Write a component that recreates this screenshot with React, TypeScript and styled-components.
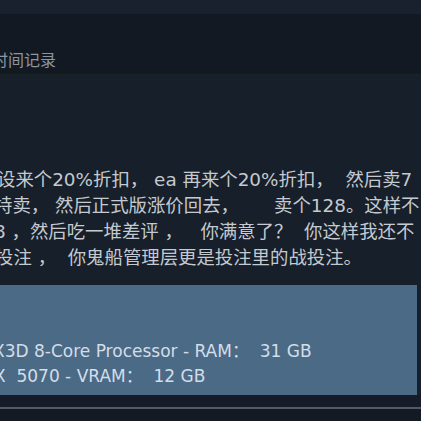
import React from "react";
import styled, { createGlobalStyle } from "styled-components";

const GlobalStyle = createGlobalStyle`
  html, body {
    margin: 0;
    padding: 0;
    background: #171f2a;
    overflow: hidden;
  }
`;

const Page = styled.div`
  width: 421px;
  height: 421px;
  overflow: hidden;
  display: flex;
  flex-direction: column;
  background: #171f2a;
  font-family: "DejaVu Sans", "Noto Sans CJK SC", sans-serif;
`;

const TopStrip = styled.div`
  height: 14px;
  flex: none;
  background: #19212f;
`;

const Header = styled.div`
  height: 61px;
  flex: none;
  background: #131922;
  display: flex;
  align-items: flex-end;
  padding-bottom: 3px;
  box-sizing: border-box;
  border-bottom: 1px dotted #1f2b29;
`;

const Line = styled.div<{ $shift: number }>`
  white-space: pre;
  margin-left: ${(p) => p.$shift}px;
`;

const HistoryLink = styled(Line)`
  font-size: 16px;
  line-height: 20px;
  color: #8d959e;
`;

const ReviewBody = styled.div`
  flex: none;
  height: 210px;
  padding-top: 92px;
  box-sizing: border-box;
  display: flex;
  flex-direction: column;
`;

const ReviewLine = styled(Line)`
  font-size: 18.4px;
  line-height: 26px;
  height: 26px;
  color: #c4cad0;
`;

const SpecsPanel = styled.div`
  flex: none;
  width: 417px;
  height: 110px;
  background: #4b6a86;
  box-sizing: border-box;
  padding-top: 54px;
  display: flex;
  flex-direction: column;
`;

const SpecLine = styled(Line)`
  font-size: 17px;
  line-height: 25px;
  height: 25px;
  color: #d3dee8;
`;

const Footer = styled.div`
  flex: 1;
  display: flex;
  flex-direction: column;
  background: #131a24;
`;

const FooterGap = styled.div`
  height: 12px;
  background: #151c27;
`;

const Divider = styled.div`
  height: 2px;
  background: #515b67;
`;

export default function App() {
  const review: [number, string][] = [
    [-3, "设来个20%折扣， ea 再来个20%折扣，  然后卖7"],
    [-6, "特卖， 然后正式版涨价回去，      卖个128。这样不"],
    [-6, "8 ，然后吃一堆差评 ，   你满意了？  你这样我还不"],
    [-5, "投注 ，  你鬼船管理层更是投注里的战投注。"],
  ];
  const specs: [number, string][] = [
    [-7, "X3D 8-Core Processor - RAM：  31 GB"],
    [-6, "X  5070 - VRAM：  12 GB"],
  ];
  return (
    <>
      <GlobalStyle />
      <Page>
        <TopStrip />
        <Header>
          <HistoryLink $shift={-8}>时间记录</HistoryLink>
        </Header>
        <ReviewBody>
          {review.map(([s, t], i) => (
            <ReviewLine key={i} $shift={s}>
              {t}
            </ReviewLine>
          ))}
        </ReviewBody>
        <SpecsPanel>
          {specs.map(([s, t], i) => (
            <SpecLine key={i} $shift={s}>
              {t}
            </SpecLine>
          ))}
        </SpecsPanel>
        <Footer>
          <FooterGap />
          <Divider />
        </Footer>
      </Page>
    </>
  );
}
